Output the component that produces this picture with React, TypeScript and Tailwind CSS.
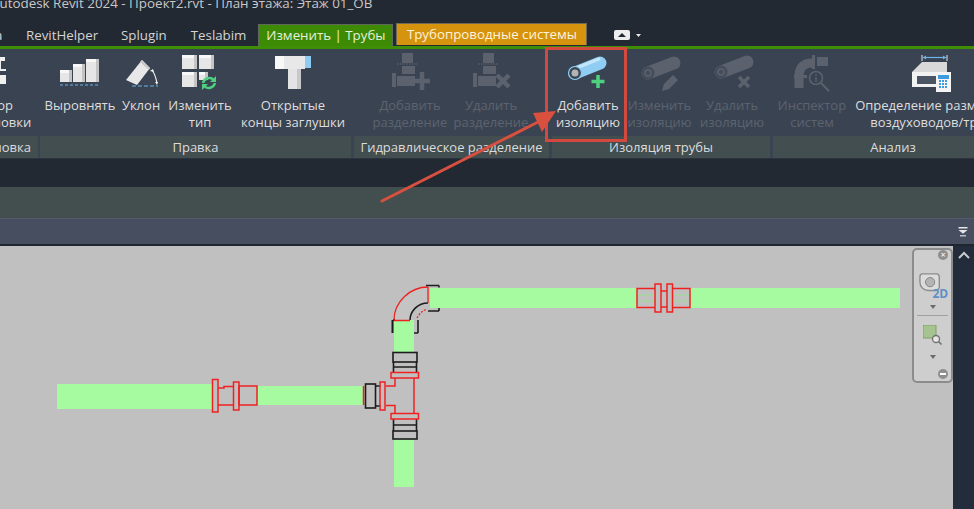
import type { ReactNode } from 'react'

const GREY = '#5b626e'

function Box3d({ x, y, w, h }: { x: number; y: number; w: number; h: number }) {
    return (
        <g>
            <rect x={x} y={y} width={w} height={h} fill="#e6e6e6" />
            <rect x={x} y={y} width={w} height={3} fill="#f8f8f8" />
            <rect x={x + w - 3} y={y} width={3} height={h} fill="#c4c4c4" />
        </g>
    )
}

function LayoutIcon() {
    return (
        <svg width="56" height="48" viewBox="0 0 56 48">
            <rect x="34" y="5" width="7" height="4" fill="#f0f0f0" />
            <path d="M34 9h2v9h6" fill="none" stroke="#f0f0f0" strokeWidth="2" />
            <rect x="34" y="23" width="8" height="9" fill="#f0f0f0" />
        </svg>
    )
}

function AlignIcon() {
    return (
        <svg width="56" height="48" viewBox="0 0 56 48">
            <Box3d x={8} y={18} w={12} h={12} />
            <Box3d x={21} y={12} w={12} h={18} />
            <Box3d x={34} y={7} w={13} h={23} />
            <path d="M8 33h39" stroke="#6bb6e8" strokeWidth="1.2" strokeDasharray="3 2" />
        </svg>
    )
}

function SlopeIcon() {
    return (
        <svg width="56" height="48" viewBox="0 0 56 48">
            <polygon points="13,28 29,8 37,16 24,33" fill="#e8e8e8" />
            <polygon points="29,8 37,16 36,18 27,10" fill="#c8c8c8" />
            <path d="M19 34h26" stroke="#6bb6e8" strokeWidth="1.2" strokeDasharray="4 2" />
            <path d="M39 18c3 4 4 8 5 13" fill="none" stroke="#f0f0f0" strokeWidth="1.2" />
            <path d="M37 19l3-2 1 3zM42 30l3 0-1 3z" fill="#f0f0f0" />
        </svg>
    )
}

function ChangeTypeIcon() {
    return (
        <svg width="56" height="48" viewBox="0 0 56 48">
            <Box3d x={10} y={3} w={15} h={14} />
            <Box3d x={27} y={3} w={15} h={14} />
            <Box3d x={10} y={20} w={15} h={15} />
            <Box3d x={27} y={20} w={9} h={8} />
            <path d="M31 31a6.5 6.5 0 0 1 11-3" fill="none" stroke="#4fd081" strokeWidth="2.4" />
            <path d="M43 31a6.5 6.5 0 0 1-11 3" fill="none" stroke="#4fd081" strokeWidth="2.4" />
            <path d="M44 24v6h-6zM30 38v-6h6z" fill="#4fd081" />
        </svg>
    )
}

function OpenEndsIcon() {
    return (
        <svg width="56" height="48" viewBox="0 0 56 48">
            <rect x="10" y="4" width="30" height="13" fill="#e8e8e8" />
            <rect x="10" y="4" width="9" height="13" fill="#f8f8f8" />
            <rect x="23" y="17" width="13" height="20" fill="#e4e4e4" />
            <rect x="32" y="17" width="4" height="20" fill="#c8c8c8" />
            <rect x="40" y="4" width="6" height="12" fill="#8dcbf3" />
        </svg>
    )
}

function SplitBase() {
    return (
        <g fill={GREY}>
            <rect x="20" y="1" width="11" height="10" />
            <path d="M15 12h21" stroke={GREY} strokeWidth="1" strokeDasharray="2 1" />
            <rect x="20" y="14" width="13" height="8" />
            <rect x="10" y="21" width="4" height="14" />
            <path d="M15 24h18v10H15z" />
        </g>
    )
}

function AddSplitIcon() {
    return (
        <svg width="56" height="48" viewBox="0 0 56 48">
            <SplitBase />
            <path d="M40 20v18M33 29h15" stroke={GREY} strokeWidth="4.5" />
        </svg>
    )
}

function RemoveSplitIcon() {
    return (
        <svg width="56" height="48" viewBox="0 0 56 48">
            <SplitBase />
            <path d="M34 23l12 12M46 23L34 35" stroke={GREY} strokeWidth="4.5" />
        </svg>
    )
}

function PipeShape({ x, y, body, end }: { x: number; y: number; body: string; end: string }) {
    return (
        <g>
            <path d={`M${x} ${y}L${x + 26} ${y - 10}`} stroke={body} strokeWidth="13" strokeLinecap="round" />
            <circle cx={x} cy={y} r="6.5" fill={end} />
            <circle cx={x} cy={y} r="3" fill="none" stroke={body} strokeWidth="1.4" />
        </g>
    )
}

function AddInsulationIcon() {
    return (
        <svg width="56" height="48" viewBox="0 0 56 48">
            <path d="M15 21L40 11" stroke="#8fcdf3" strokeWidth="13" strokeLinecap="round" />
            <path d="M14 17L39 7" stroke="#c4e6fa" strokeWidth="3" strokeLinecap="round" />
            <circle cx="15" cy="21" r="6.5" fill="#3c4654" stroke="#8fcdf3" strokeWidth="1.2" />
            <circle cx="15" cy="21" r="3.5" fill="#b4b4b4" />
            <path d="M38 23v13M31.5 29.5h13" stroke="#4fd081" strokeWidth="3.5" />
        </svg>
    )
}

function EditInsulationIcon() {
    return (
        <svg width="56" height="48" viewBox="0 0 56 48">
            <PipeShape x={16} y={21} body={GREY} end="#454d5a" />
            <path d="M30 39l2-7 9-9 5 5-9 9z" fill={GREY} />
        </svg>
    )
}

function RemoveInsulationIcon() {
    return (
        <svg width="56" height="48" viewBox="0 0 56 48">
            <PipeShape x={17} y={20} body={GREY} end="#454d5a" />
            <path d="M35 25l10 10M45 25L35 35" stroke={GREY} strokeWidth="3.5" />
        </svg>
    )
}

function InspectorIcon() {
    return (
        <svg width="56" height="48" viewBox="0 0 56 48">
            <path d="M15 36V24c0-9 5-13 13-13" fill="none" stroke={GREY} strokeWidth="9" />
            <rect x="10" y="23" width="13" height="3" fill={GREY} />
            <rect x="28" y="3" width="3" height="14" fill={GREY} />
            <rect x="33" y="5" width="11" height="9" fill={GREY} />
            <circle cx="32" cy="26" r="6.5" fill="#3a4352" stroke={GREY} strokeWidth="1.6" />
            <path d="M37 31l8 8" stroke={GREY} strokeWidth="2" />
            <path d="M32 25v5M32 22v1.5" stroke={GREY} strokeWidth="1.5" />
        </svg>
    )
}

function DuctSizeIcon() {
    return (
        <svg width="56" height="48" viewBox="0 0 56 48">
            <g transform="translate(6 0)">
                <path d="M13 3v6M38 3v6" stroke="#dfe6ee" strokeWidth="1" />
                <path d="M14 5.5h23" stroke="#6bb6e8" strokeWidth="1.2" />
                <path d="M14 5.5l3-2v4zM37 5.5l-3-2v4z" fill="#6bb6e8" />
                <polygon points="3,20 13,10 38,10 38,20" fill="#d9d9d9" />
                <rect x="3" y="20" width="35" height="15" fill="#f2f2f2" />
                <rect x="8" y="24" width="25" height="8" fill="#4a5462" />
                <rect x="27" y="20" width="15" height="20" fill="#f4f4f4" />
                <rect x="29" y="23" width="11" height="4" fill="#3f9be0" />
                <path d="M30 29h2M33 29h2M36 29h2M30 32h2M33 32h2M36 32h2M30 35h2M33 35h2M36 35h2" stroke="#3f9be0" strokeWidth="2" />
            </g>
        </svg>
    )
}

function RibbonButton({ w, lines, icon, disabled }: { w: string; lines: string[]; icon: ReactNode; disabled?: boolean }) {
    return (
        <div className={`${w} shrink-0 flex flex-col items-center`}>
            <div className="h-[48px] mt-[3px] flex justify-center">{icon}</div>
            <div className={`mt-[-3px] text-[13px] leading-[17px] text-center whitespace-nowrap flex flex-col items-center ${disabled ? 'text-[#5c636f]' : 'text-[#dedede]'}`}>
                {lines.map(line => (
                    <span key={line}>{line}</span>
                ))}
            </div>
        </div>
    )
}

function Panel({ w, label, children, className = '', labelClass = 'justify-center' }: { w: string; label: string; children: ReactNode; className?: string; labelClass?: string }) {
    return (
        <div className={`${w} shrink-0 flex flex-col ${className}`}>
            <div className="h-[87px] flex">{children}</div>
            <div className={`h-[22px] pt-[1px] bg-[#434e50] text-[13px] text-[#dcdcdc] flex items-center whitespace-nowrap ${labelClass}`}>{label}</div>
        </div>
    )
}

function Tabs() {
    return (
        <div className="h-[22px] flex items-end text-[13.3px] text-[#d4d4d4]">
            <span className="w-[21px] -ml-[5px] h-full leading-[22px] shrink-0">а</span>
            <span className="ml-[10px] leading-[22px] h-full">RevitHelper</span>
            <span className="ml-[23px] leading-[22px] h-full">Splugin</span>
            <span className="ml-[24px] leading-[22px] h-full">Teslabim</span>
            <div className="ml-[12px] h-full w-[135px] bg-[#3d8a04] text-[#e6f0dc] flex items-center justify-center border-t border-x border-[#5f6a5a] shrink-0">Изменить | Трубы</div>
            <div className="ml-[3px] h-full w-[191px] bg-[#d6930e] text-[#fdf4dc] flex items-center justify-center border-t border-x border-[#6f6a58] mb-[1px] shrink-0">Трубопроводные системы</div>
            <svg className="ml-[27px] self-center" width="28" height="12" viewBox="0 0 28 12">
                <rect x="0" y="1" width="16" height="10" rx="2" fill="#eeeeee" />
                <path d="M4 8l4-4 4 4z" fill="#222933" />
                <path d="M22 5h5l-2.5 3z" fill="#e6e6e6" />
            </svg>
        </div>
    )
}

function Drawing() {
    const red = '#f02020'
    const black = '#1c1c1c'
    return (
        <svg className="block" width="953" height="263" viewBox="0 246 953 263">
            {/* трубы */}
            <g fill="#a6fba0">
                <rect x="57" y="384" width="155" height="25" />
                <rect x="257" y="386" width="106" height="19" />
                <rect x="430" y="288" width="207" height="20" />
                <rect x="690" y="288" width="210" height="20" />
                <rect x="394" y="320" width="20" height="32" />
                <rect x="394" y="439" width="20" height="48" />
            </g>
            {/* фитинг слева */}
            <g fill="none" stroke={red} strokeWidth="1.5">
                <rect x="212.5" y="379.5" width="5.5" height="32.5" />
                <path d="M218 388h6v-1.5h9M218 405h15" />
                <rect x="233.5" y="382" width="5.5" height="28" />
                <rect x="239" y="386" width="18" height="19" />
            </g>
            {/* фитинг справа */}
            <g stroke="#a6d8a0" strokeWidth="2" opacity="0.7">
                <path d="M638 295h17M638 301h17M673 295h16M673 301h16" />
            </g>
            <g fill="none" stroke={red} strokeWidth="1.5">
                <path d="M655 288.5h-18v19h18M672 288.5h18v19h-18" />
                <rect x="655" y="284" width="6" height="28" />
                <rect x="667" y="284" width="5.5" height="28" />
                <path d="M661 291h6M661 307h6" />
            </g>
            {/* тройник */}
            <g fill="none" stroke={black} strokeWidth="1.6">
                <rect x="393" y="352.5" width="24" height="9.5" />
                <path d="M393.5 362v10M416.5 362v10M393.5 367h23" />
                <rect x="393" y="431" width="24" height="8" />
                <path d="M393.5 419v12M416.5 419v12M393.5 425h23" />
                <rect x="365.5" y="384" width="10" height="24" />
                <path d="M375.5 386h5M375.5 406h5" />
            </g>
            <g fill="none" stroke={red} strokeWidth="1.5">
                <rect x="391" y="372.5" width="27.5" height="5.5" />
                <rect x="391" y="413.5" width="27.5" height="5.5" />
                <path d="M414 378v35.5M395 378v8h-9M395 413.5v-8h-9" />
                <rect x="380" y="382" width="5" height="28" />
                <path d="M363.5 386v19" />
            </g>
            {/* отвод */}
            <path d="M394 320c0-18 16-33 34-33v16c-10 0-18 8-18 17z" fill="#c4c4c4" />
            <g fill="none" stroke={black} strokeWidth="1.6">
                <path d="M410 320c0-9 8-17 18-17" />
                <path d="M392.5 320v13M393 320h2" strokeWidth="2" />
                <path d="M418 333v-13M414 333h4" />
                <path d="M426 285.5h13M428 311h11M439 311v-3M439 285.5v2" />
            </g>
            <g fill="none" stroke={red} strokeWidth="1.3">
                <path d="M394 320c0-18 16-33 34-33" />
                <path d="M394 320.5h16M428 287v16" />
                <path d="M417 318c2-4 5-7 10-9" strokeDasharray="2 1.5" />
            </g>
        </svg>
    )
}

function NavBar() {
    return (
        <div className="absolute left-[912px] top-[248px] w-[41px] h-[135px] rounded-[5px] border-2 border-[#8c8c8c] bg-[#cecece] flex flex-col items-center">
            <div className="self-end mr-[3px] w-[10px] h-[10px] rounded-full bg-[#8e8e8e] text-white text-[9px] leading-[10px] text-center">×</div>
            <div className="relative mt-[12px] w-[28px] h-[30px]">
                <svg width="24" height="24" viewBox="0 0 26 26">
                    <path d="M4 2h15c3 0 3 2 3 4v10c0 2-2 4-4 4h-8C5 20 1 16 1 11V5c0-2 1-3 3-3z" fill="#dcdcdc" stroke="#8c8c8c" strokeWidth="1.5" />
                    <circle cx="12" cy="11" r="5" fill="#b4b4b4" stroke="#808080" />
                </svg>
                <span className="absolute left-[14px] top-[15px] text-[12px] leading-[14px] font-bold text-[#5f8fc4]">2D</span>
            </div>
            <svg className="mt-[3px]" width="8" height="5" viewBox="0 0 8 5"><path d="M1 0h6L4 4z" fill="#6c6c6c" /></svg>
            <div className="mt-[5px] w-[31px] h-px bg-[#a0a0a0]" />
            <svg className="mt-[9px]" width="20" height="21" viewBox="0 0 20 21">
                <rect x="0" y="0" width="13" height="13" fill="#a6c490" stroke="#7fa06a" />
                <circle cx="13" cy="14" r="3.5" fill="#e6e6e6" stroke="#707070" strokeWidth="1.3" />
                <path d="M15.5 16.5l3 3" stroke="#707070" strokeWidth="1.6" />
            </svg>
            <svg className="mt-[9px]" width="8" height="5" viewBox="0 0 8 5"><path d="M1 0h6L4 4z" fill="#6c6c6c" /></svg>
            <div className="self-end mr-[3px] mt-auto mb-[2px] w-[10px] h-[10px] rounded-full bg-[#8e8e8e] flex items-center justify-center">
                <div className="w-[6px] h-[2px] bg-white" />
            </div>
        </div>
    )
}

export default function App() {
    return (
        <div className="relative w-[974px] h-[509px] overflow-hidden bg-[#222933] font-['Open_Sans',sans-serif]">
            {/* заголовок окна */}
            <div className="h-[24px] overflow-hidden">
                <div className="-mt-[7px] -ml-[9px] text-[13.4px] leading-[20px] text-[#c8c8c8] whitespace-nowrap">Autodesk Revit 2024 - Проект2.rvt - План этажа: Этаж 01_ОВ</div>
            </div>

            <Tabs />
            <div className="h-[3px] bg-[#3f8f06]" />

            {/* лента */}
            <div className="h-[110px] bg-[#3a4352] flex gap-[2px] border-b border-[#2c3440]">
                <Panel w="w-[38px]" label="Компоновка" labelClass="justify-end pr-[7px]">
                    <RibbonButton w="w-[88px] -ml-[52px]" lines={['Выбор', 'компоновки']} icon={<LayoutIcon />} />
                </Panel>
                <Panel w="w-[311px]" label="Правка">
                    <RibbonButton w="w-[80px]" lines={['Выровнять']} icon={<AlignIcon />} />
                    <RibbonButton w="w-[42px]" lines={['Уклон']} icon={<SlopeIcon />} />
                    <RibbonButton w="w-[76px]" lines={['Изменить', 'тип']} icon={<ChangeTypeIcon />} />
                    <RibbonButton w="w-[110px]" lines={['Открытые', 'концы заглушки']} icon={<OpenEndsIcon />} />
                </Panel>
                <Panel w="w-[195px]" label="Гидравлическое разделение" className="ml-[1px]">
                    <div className="w-[14px] shrink-0" />
                    <RibbonButton w="w-[84px]" lines={['Добавить', 'разделение']} icon={<AddSplitIcon />} disabled />
                    <RibbonButton w="w-[78px]" lines={['Удалить', 'разделение']} icon={<RemoveSplitIcon />} disabled />
                </Panel>
                <Panel w="w-[218px]" label="Изоляция трубы" className="ml-[1px]">
                    <RibbonButton w="w-[72px]" lines={['Добавить', 'изоляцию']} icon={<AddInsulationIcon />} />
                    <RibbonButton w="w-[71px]" lines={['Изменить', 'изоляцию']} icon={<EditInsulationIcon />} disabled />
                    <RibbonButton w="w-[74px]" lines={['Удалить', 'изоляцию']} icon={<RemoveInsulationIcon />} disabled />
                </Panel>
                <Panel w="w-[240px]" label="Анализ" className="ml-[1px]">
                    <RibbonButton w="w-[78px]" lines={['Инспектор', 'систем']} icon={<InspectorIcon />} disabled />
                    <RibbonButton w="w-[160px]" lines={['Определение размеров', 'воздуховодов/труб']} icon={<DuctSizeIcon />} />
                </Panel>
            </div>

            {/* панель параметров */}
            <div className="h-[28px]" />
            <div className="h-[31px] bg-[#424f4e]" />

            {/* полоса вида */}
            <div className="h-[26px] bg-[#464e60] border-t border-[#525b6d] flex items-center justify-end pr-[5px]">
                <svg width="12" height="11" viewBox="0 0 16 14">
                    <path d="M2 1h12v2H2z" fill="#e6e6e6" />
                    <path d="M2 5h12L8 10z" fill="#e6e6e6" />
                    <path d="M4 12h8v1.5H4z" fill="#e6e6e6" />
                </svg>
            </div>
            <div className="h-[2px] bg-[#20262f]" />

            {/* область чертежа */}
            <div className="h-[263px] flex">
                <div className="w-[953px] bg-[#c0c0c0]">
                    <Drawing />
                </div>
                <div className="flex-1 bg-[#232c3a] flex justify-center pt-[5px]">
                    <svg width="12" height="8" viewBox="0 0 12 8">
                        <path d="M1 7l5-5 5 5" fill="none" stroke="#c8ccd2" strokeWidth="2" />
                    </svg>
                </div>
            </div>

            <NavBar />

            {/* выноска */}
            <div className="absolute left-[545px] top-[47px] w-[82px] h-[95px] border-[3px] border-[#d2493f]" />
            <svg className="absolute left-0 top-0 pointer-events-none" width="974" height="509" viewBox="0 0 974 509">
                <path d="M382 201L540 121" stroke="#d9503f" strokeWidth="3" strokeLinecap="round" />
                <polygon points="556,111 533,113 542,132" fill="#d9503f" />
            </svg>
        </div>
    )
}
